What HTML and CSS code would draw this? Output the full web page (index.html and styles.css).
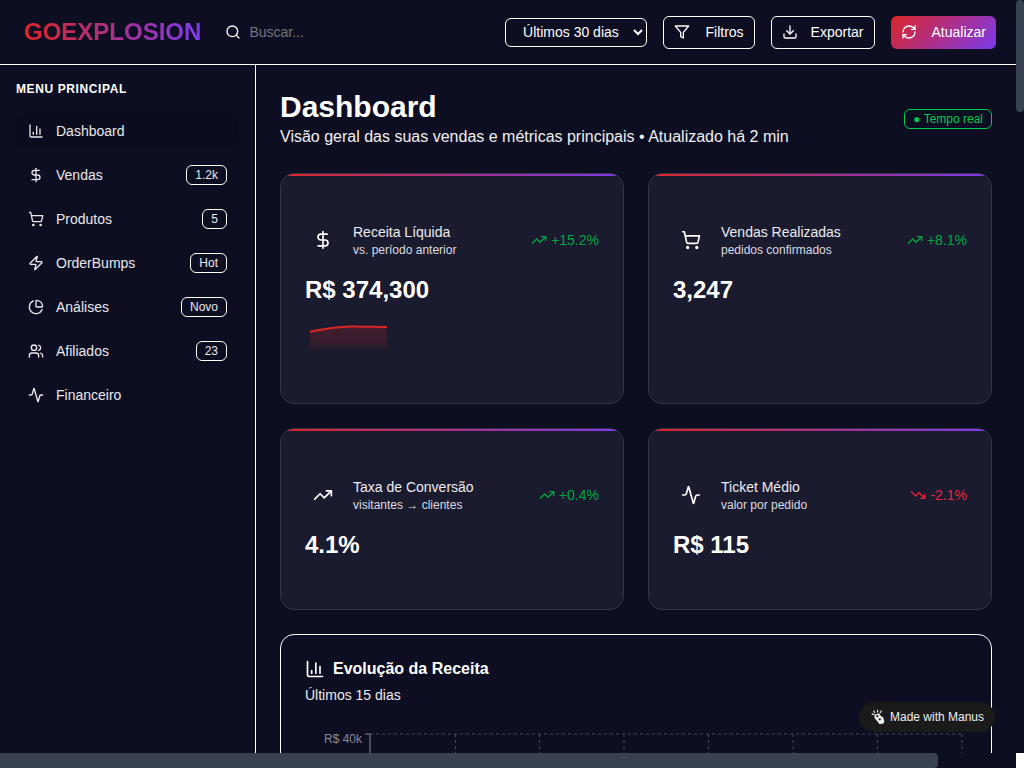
FILE: index.html
```html
<!DOCTYPE html>
<html lang="pt-BR">
<head>
<meta charset="utf-8">
<title>GoExplosion Dashboard</title>
<link rel="stylesheet" href="styles.css">
</head>
<body>
<div class="page">
<header class="topbar">
  <div class="logo">GOEXPLOSION</div>
  <div class="search">
    <svg class="icon" viewBox="0 0 24 24"><circle cx="11" cy="11" r="8"/><path d="m21 21-4.3-4.3"/></svg>
    <input class="search-input" type="text" placeholder="Buscar...">
  </div>
  <div class="actions">
    <select class="period"><option>Últimos 30 dias</option></select>
    <button class="btn"><svg class="icon" viewBox="0 0 24 24"><polygon points="22 3 2 3 10 12.46 10 19 14 21 14 12.46 22 3"/></svg>Filtros</button>
    <button class="btn btn-export"><svg class="icon" viewBox="0 0 24 24"><path d="M21 15v4a2 2 0 0 1-2 2H5a2 2 0 0 1-2-2v-4"/><polyline points="7 10 12 15 17 10"/><line x1="12" y1="15" x2="12" y2="3"/></svg>Exportar</button>
    <button class="btn btn-primary"><svg class="icon" viewBox="0 0 24 24"><path d="M3 12a9 9 0 0 1 9-9 9.75 9.75 0 0 1 6.74 2.74L21 8"/><path d="M21 3v5h-5"/><path d="M21 12a9 9 0 0 1-9 9 9.75 9.75 0 0 1-6.74-2.74L3 16"/><path d="M8 16H3v5"/></svg>Atualizar</button>
  </div>
</header>

<div class="layout">
  <aside class="sidebar">
    <h2 class="menu-title">MENU PRINCIPAL</h2>
    <nav class="menu">
      <a class="menu-item active"><svg class="icon" viewBox="0 0 24 24"><path d="M3 3v16a2 2 0 0 0 2 2h16"/><path d="M18 17V9"/><path d="M13 17V5"/><path d="M8 17v-3"/></svg><span class="menu-label">Dashboard</span></a>
      <a class="menu-item"><svg class="icon" viewBox="0 0 24 24"><line x1="12" y1="2" x2="12" y2="22"/><path d="M17 5H9.5a3.5 3.5 0 0 0 0 7h5a3.5 3.5 0 0 1 0 7H6"/></svg><span class="menu-label">Vendas</span><span class="badge">1.2k</span></a>
      <a class="menu-item"><svg class="icon" viewBox="0 0 24 24"><circle cx="8" cy="21" r="1"/><circle cx="19" cy="21" r="1"/><path d="M2.05 2.05h2l2.66 12.42a2 2 0 0 0 2 1.58h9.78a2 2 0 0 0 1.95-1.57l1.65-7.43H5.12"/></svg><span class="menu-label">Produtos</span><span class="badge">5</span></a>
      <a class="menu-item"><svg class="icon" viewBox="0 0 24 24"><path d="M4 14a1 1 0 0 1-.78-1.63l9.9-10.2a.5.5 0 0 1 .86.46l-1.92 6.02A1 1 0 0 0 13 10h7a1 1 0 0 1 .78 1.63l-9.9 10.2a.5.5 0 0 1-.86-.46l1.92-6.02A1 1 0 0 0 11 14z"/></svg><span class="menu-label">OrderBumps</span><span class="badge">Hot</span></a>
      <a class="menu-item"><svg class="icon" viewBox="0 0 24 24"><path d="M21 12c.552 0 1.005-.449.95-.998a10 10 0 0 0-8.953-8.951c-.55-.055-.998.398-.998.95v8a1 1 0 0 0 1 1z"/><path d="M21.21 15.89A10 10 0 1 1 8 2.83"/></svg><span class="menu-label">Análises</span><span class="badge">Novo</span></a>
      <a class="menu-item"><svg class="icon" viewBox="0 0 24 24"><path d="M16 21v-2a4 4 0 0 0-4-4H6a4 4 0 0 0-4 4v2"/><circle cx="9" cy="7" r="4"/><path d="M22 21v-2a4 4 0 0 0-3-3.87"/><path d="M16 3.13a4 4 0 0 1 0 7.75"/></svg><span class="menu-label">Afiliados</span><span class="badge">23</span></a>
      <a class="menu-item"><svg class="icon" viewBox="0 0 24 24"><path d="M22 12h-2.48a2 2 0 0 0-1.93 1.46l-2.35 8.36a.25.25 0 0 1-.48 0L9.24 2.18a.25.25 0 0 0-.48 0l-2.35 8.36A2 2 0 0 1 4.49 12H2"/></svg><span class="menu-label">Financeiro</span></a>
    </nav>
  </aside>

  <main class="main">
    <div class="page-head">
      <div>
        <h1 class="page-title">Dashboard</h1>
        <p class="page-sub">Visão geral das suas vendas e métricas principais • Atualizado há 2 min</p>
      </div>
      <span class="live">● Tempo real</span>
    </div>

    <section class="stats">
      <article class="stat">
        <div class="stat-head">
          <span class="stat-icon"><svg class="icon icon-md" viewBox="0 0 24 24"><line x1="12" y1="2" x2="12" y2="22"/><path d="M17 5H9.5a3.5 3.5 0 0 0 0 7h5a3.5 3.5 0 0 1 0 7H6"/></svg></span>
          <div class="stat-text"><div class="stat-name">Receita Líquida</div><div class="stat-note">vs. período anterior</div></div>
          <span class="delta up"><svg class="icon" viewBox="0 0 24 24"><path d="M16 7h6v6"/><path d="m22 7-8.5 8.5-5-5L2 17"/></svg>+15.2%</span>
        </div>
        <div class="stat-value">R$ 374,300</div>
        <svg class="spark" viewBox="0 0 82 32">
          <defs><linearGradient id="sparkFill" x1="0" y1="0" x2="0" y2="1"><stop offset="0" stop-color="#dc2626" stop-opacity=".2"/><stop offset=".55" stop-color="#dc2626" stop-opacity=".16"/><stop offset="1" stop-color="#dc2626" stop-opacity=".04"/></linearGradient></defs>
          <path class="spark-area" d="M5 9.500C18 7 30 4.500 45 4.200 58 4 70 4.700 82 4.800V28H5z"/>
          <path class="spark-line" d="M5 9.500C18 7 30 4.500 45 4.200 58 4 70 4.700 82 4.800"/>
        </svg>
      </article>

      <article class="stat">
        <div class="stat-head">
          <span class="stat-icon"><svg class="icon icon-md" viewBox="0 0 24 24"><circle cx="8" cy="21" r="1"/><circle cx="19" cy="21" r="1"/><path d="M2.05 2.05h2l2.66 12.42a2 2 0 0 0 2 1.58h9.78a2 2 0 0 0 1.95-1.57l1.65-7.43H5.12"/></svg></span>
          <div class="stat-text"><div class="stat-name">Vendas Realizadas</div><div class="stat-note">pedidos confirmados</div></div>
          <span class="delta up"><svg class="icon" viewBox="0 0 24 24"><path d="M16 7h6v6"/><path d="m22 7-8.5 8.5-5-5L2 17"/></svg>+8.1%</span>
        </div>
        <div class="stat-value">3,247</div>
      </article>

      <article class="stat">
        <div class="stat-head">
          <span class="stat-icon"><svg class="icon icon-md" viewBox="0 0 24 24"><path d="M16 7h6v6"/><path d="m22 7-8.5 8.5-5-5L2 17"/></svg></span>
          <div class="stat-text"><div class="stat-name">Taxa de Conversão</div><div class="stat-note">visitantes → clientes</div></div>
          <span class="delta up"><svg class="icon" viewBox="0 0 24 24"><path d="M16 7h6v6"/><path d="m22 7-8.5 8.5-5-5L2 17"/></svg>+0.4%</span>
        </div>
        <div class="stat-value">4.1%</div>
      </article>

      <article class="stat">
        <div class="stat-head">
          <span class="stat-icon"><svg class="icon icon-md" viewBox="0 0 24 24"><path d="M22 12h-2.48a2 2 0 0 0-1.93 1.46l-2.35 8.36a.25.25 0 0 1-.48 0L9.24 2.18a.25.25 0 0 0-.48 0l-2.35 8.36A2 2 0 0 1 4.49 12H2"/></svg></span>
          <div class="stat-text"><div class="stat-name">Ticket Médio</div><div class="stat-note">valor por pedido</div></div>
          <span class="delta down"><svg class="icon" viewBox="0 0 24 24"><path d="M16 17h6v-6"/><path d="m22 17-8.500-8.500-5 5L2 7"/></svg>-2.1%</span>
        </div>
        <div class="stat-value">R$ 115</div>
      </article>
    </section>

    <section class="chart-card">
      <h3 class="chart-title"><svg class="icon icon-md" viewBox="0 0 24 24"><path d="M3 3v16a2 2 0 0 0 2 2h16"/><path d="M18 17V9"/><path d="M13 17V5"/><path d="M8 17v-3"/></svg>Evolução da Receita</h3>
      <p class="chart-sub">Últimos 15 dias</p>
      <svg class="chart" viewBox="0 0 661 60">
        <path class="grid" d="M65 5H657M150.500 5V60M234.500 5V60M319 5V60M403.500 5V60M488 5V60M572.500 5V60M657 5V60"/>
        <path class="axis" d="M60 5H65V60"/>
        <text class="tick" x="57" y="13.500" text-anchor="end">R$ 40k</text>
      </svg>
    </section>
  </main>
</div>
</div>

<div class="scroll-y"><div class="scroll-y-thumb"></div></div>
<div class="scroll-x"><div class="scroll-x-thumb"></div></div>
<div class="scroll-corner"></div>

<a class="made">
  <svg class="made-icon" viewBox="0 0 16 16"><path class="made-burst" d="M4 3.200 3 1.600M7 2.600V.8M10 3.200l1-1.600M2.800 5.200 1.200 4.600"/><path class="made-hand" d="M3.500 5.500 8.700 4l2 3.200 2.300 1 1.300 4.800-1.500 2.200-4 .3-1.800-2.800L4 9.500z"/><circle class="made-hole" cx="6.700" cy="7" r="1.200"/><circle class="made-hole" cx="9.300" cy="10.500" r="1.200"/></svg>
  Made with Manus
</a>
</body>
</html>
```
FILE: styles.css
```css
* { box-sizing: border-box; }
html, body { height: 100%; overflow: hidden; }
body {
  margin: 0;
  background: #0d0e21;
  color: #fff;
  font-family: "Liberation Sans", Arial, sans-serif;
  font-size: 14px;
  line-height: 20px;
}
.page { width: 1016px; height: 100%; overflow: hidden; }

.scroll-y {
  position: fixed;
  top: 0;
  right: 0;
  bottom: 15px;
  width: 8px;
  background: #0d0e21;
}
.scroll-y-thumb { height: 112px; border-radius: 4px; background: #374151; }
.scroll-x {
  position: fixed;
  left: 0;
  right: 8px;
  bottom: 0;
  height: 15px;
  background: #0d0e21;
}
.scroll-x-thumb { width: 938px; height: 15px; border-radius: 0 4px 4px 0; background: #374151; }
.scroll-corner {
  position: fixed;
  right: 0;
  bottom: 0;
  width: 8px;
  height: 15px;
  background: #fff;
}

.icon {
  width: 16px;
  height: 16px;
  flex: none;
  fill: none;
  stroke: currentColor;
  stroke-width: 2;
  stroke-linecap: round;
  stroke-linejoin: round;
}
.icon-md { width: 20px; height: 20px; }

.topbar {
  display: flex;
  align-items: center;
  height: 65px;
  padding: 0 20px 0 24px;
  border-bottom: 1px solid #fff;
}
.logo {
  font-size: 24px;
  line-height: 32px;
  font-weight: 700;
  background: linear-gradient(90deg, #dc2626, #7c3aed);
  -webkit-background-clip: text;
  background-clip: text;
  color: transparent;
}
.search {
  display: flex;
  align-items: center;
  gap: 8px;
  margin-left: 24px;
}
.search-input {
  width: 200px;
  padding: 0;
  border: 0;
  outline: 0;
  background: transparent;
  color: #fff;
  font: inherit;
}
.search-input::placeholder { color: #757580; }
.actions {
  display: flex;
  align-items: center;
  gap: 16px;
  margin-left: auto;
}
.period {
  width: 142.4px;
  height: 29px;
  padding: 0 0 0 13px;
  border: 1px solid #fff;
  border-radius: 6px;
  background: #0d0e21;
  color: #fff;
  font: inherit;
}
.btn {
  display: flex;
  align-items: center;
  gap: 15px;
  height: 33px;
  padding: 0 10px;
  border: 1px solid #fff;
  border-radius: 6px;
  background: transparent;
  color: #fff;
  font: inherit;
}
.btn-export { gap: 13px; }
.btn-primary {
  border: 0;
  background: linear-gradient(135deg, #dc2626, #7c3aed);
}

.layout { display: flex; height: 703px; }
.sidebar {
  flex: none;
  width: 256px;
  padding: 16px;
  border-right: 1px solid #fff;
}
.menu-title {
  margin: 0 0 16px;
  font-size: 12px;
  line-height: 16px;
  font-weight: 700;
  letter-spacing: .6px;
}
.menu { display: flex; flex-direction: column; gap: 8px; }
.menu-item {
  display: flex;
  align-items: center;
  gap: 12px;
  height: 36px;
  padding: 0 12px;
  border-radius: 8px;
  color: #e8e8ec;
}
.menu-item.active { background: #0b0c1d; }
.menu-label { flex: 1; }
.badge {
  height: 20px;
  padding: 0 8px;
  border: 1px solid #fff;
  border-radius: 6px;
  font-size: 12px;
  line-height: 18px;
}

.main { flex: 1; min-width: 0; padding: 24px; }
.page-head {
  display: flex;
  justify-content: space-between;
  align-items: center;
  margin-bottom: 24px;
}
.page-title { margin: 0; font-size: 30px; line-height: 36px; font-weight: 700; }
.page-sub { margin: 0; font-size: 16px; line-height: 24px; color: #f0f0f2; }
.live {
  padding: 0 8px;
  height: 20px;
  border: 1px solid #00c950;
  border-radius: 6px;
  color: #00c950;
  font-size: 12px;
  line-height: 18px;
}

.stats { display: grid; grid-template-columns: 1fr 1fr; gap: 24px; }
.stat {
  position: relative;
  overflow: hidden;
  padding: 48px 24px;
  background: #1a1b2e;
  border: 1px solid #33354a;
  border-radius: 14px;
}
.stat::before {
  content: "";
  position: absolute;
  top: 0;
  left: 0;
  right: 0;
  height: 2px;
  background: linear-gradient(90deg, #dc2626, #7c3aed);
}
.stat-head { display: flex; align-items: center; gap: 12px; }
.stat-icon { display: flex; justify-content: center; width: 36px; }
.stat-text { flex: 1; }
.stat-name { line-height: 20px; color: #ececf0; }
.stat-note { font-size: 12px; line-height: 16px; color: #dcdce2; }
.delta { display: flex; align-items: center; gap: 4px; }
.up { color: #00a63e; }
.down { color: #e7283a; }
.stat-value {
  margin-top: 16px;
  font-size: 24px;
  line-height: 32px;
  font-weight: 700;
}
.spark { display: block; width: 82px; height: 32.5px; margin-top: 16px; }
.spark-area { fill: url(#sparkFill); }
.spark-line { fill: none; stroke: #dc2626; stroke-width: 2; }

.chart-card {
  margin-top: 24px;
  padding: 24px;
  border: 1px solid #fff;
  border-radius: 14px;
}
.chart-title {
  display: flex;
  align-items: center;
  gap: 8px;
  margin: 0;
  font-size: 16px;
  line-height: 20px;
  font-weight: 700;
}
.chart-sub { margin: 6px 0 0; color: #ececf0; }
.chart { display: block; width: 661px; height: 60px; margin-top: 24px; }
.grid { fill: none; stroke: #45475a; stroke-dasharray: 3 3; }
.axis { fill: none; stroke: #8a8a96; }
.tick { fill: #8a8a96; font-size: 12px; }

.made {
  position: fixed;
  top: 702px;
  left: 859px;
  display: flex;
  align-items: center;
  gap: 4px;
  height: 30px;
  padding: 0 11px 0 12px;
  border-radius: 15px;
  background: #1a1a1a;
  color: #f0f0f0;
  font-size: 12px;
}
.made-icon { width: 15px; height: 16px; flex: none; }
.made-burst { fill: none; stroke: #f0f0f0; stroke-width: 1.300; stroke-linecap: round; }
.made-hand { fill: #f0f0f0; }
.made-hole { fill: #1a1a1a; }
```
